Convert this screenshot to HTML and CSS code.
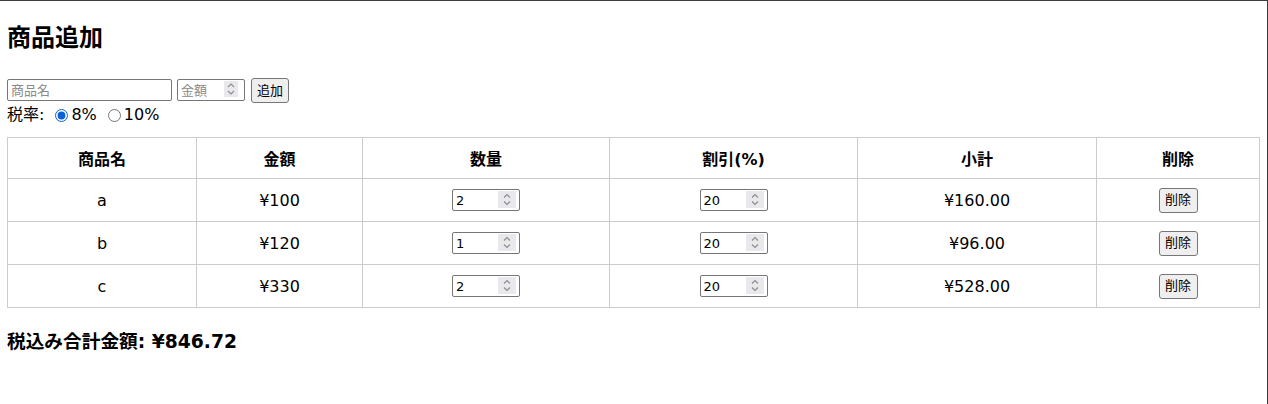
FILE: index.html
```html
<!DOCTYPE html>
<html lang="ja">
<head>
<meta charset="utf-8">
<title>商品追加</title>
<link rel="stylesheet" href="styles.css">
</head>
<body>
<div class="frame">
  <h2 class="title">商品追加</h2>
  <div class="add-row">
    <input class="name-input" type="text" placeholder="商品名">
    <span class="num-wrap price-wrap">
      <input class="price-input" type="number" placeholder="金額">
      <span class="spin"><svg viewBox="0 0 14 16" width="14" height="16"><path d="M4 6 L7 3 L10 6 M4 10 L7 13 L10 10" fill="none" stroke="#8c8c8c" stroke-width="1.1"/></svg></span>
    </span>
    <button class="btn add-btn">追加</button>
  </div>
  <div class="tax-row">
    <span class="tax-label">税率:</span>
    <label class="radio r1"><input type="radio" name="tax" checked>8%</label>
    <label class="radio r2"><input type="radio" name="tax">10%</label>
  </div>
  <table class="items">
    <thead>
      <tr>
        <th class="c1">商品名</th>
        <th class="c2">金額</th>
        <th class="c3">数量</th>
        <th class="c4">割引(%)</th>
        <th class="c5">小計</th>
        <th class="c6">削除</th>
      </tr>
    </thead>
    <tbody>
      <tr>
        <td>a</td><td>¥100</td>
        <td><span class="num-wrap"><input class="num" type="number" value="2"><span class="spin"><svg viewBox="0 0 18 17" width="18" height="17"><path d="M6 6.5 L9 3.5 L12 6.5 M6 10.5 L9 13.5 L12 10.5" fill="none" stroke="#8c8c8c" stroke-width="1.1"/></svg></span></span></td>
        <td><span class="num-wrap"><input class="num" type="number" value="20"><span class="spin"><svg viewBox="0 0 18 17" width="18" height="17"><path d="M6 6.5 L9 3.5 L12 6.5 M6 10.5 L9 13.5 L12 10.5" fill="none" stroke="#8c8c8c" stroke-width="1.1"/></svg></span></span></td>
        <td>¥160.00</td>
        <td><button class="btn del-btn">削除</button></td>
      </tr>
      <tr>
        <td>b</td><td>¥120</td>
        <td><span class="num-wrap"><input class="num" type="number" value="1"><span class="spin"><svg viewBox="0 0 18 17" width="18" height="17"><path d="M6 6.5 L9 3.5 L12 6.5 M6 10.5 L9 13.5 L12 10.5" fill="none" stroke="#8c8c8c" stroke-width="1.1"/></svg></span></span></td>
        <td><span class="num-wrap"><input class="num" type="number" value="20"><span class="spin"><svg viewBox="0 0 18 17" width="18" height="17"><path d="M6 6.5 L9 3.5 L12 6.5 M6 10.5 L9 13.5 L12 10.5" fill="none" stroke="#8c8c8c" stroke-width="1.1"/></svg></span></span></td>
        <td>¥96.00</td>
        <td><button class="btn del-btn">削除</button></td>
      </tr>
      <tr>
        <td>c</td><td>¥330</td>
        <td><span class="num-wrap"><input class="num" type="number" value="2"><span class="spin"><svg viewBox="0 0 18 17" width="18" height="17"><path d="M6 6.5 L9 3.5 L12 6.5 M6 10.5 L9 13.5 L12 10.5" fill="none" stroke="#8c8c8c" stroke-width="1.1"/></svg></span></span></td>
        <td><span class="num-wrap"><input class="num" type="number" value="20"><span class="spin"><svg viewBox="0 0 18 17" width="18" height="17"><path d="M6 6.5 L9 3.5 L12 6.5 M6 10.5 L9 13.5 L12 10.5" fill="none" stroke="#8c8c8c" stroke-width="1.1"/></svg></span></span></td>
        <td>¥528.00</td>
        <td><button class="btn del-btn">削除</button></td>
      </tr>
    </tbody>
  </table>
  <h3 class="total">税込み合計金額: ¥846.72</h3>
</div>
</body>
</html>
```
FILE: styles.css
```css
html, body {
  margin: 0;
  padding: 0;
  background: #fff;
}
body {
  font-family: "DejaVu Sans", "Noto Sans CJK JP", sans-serif;
  font-size: 16px;
  color: #000;
}
.frame {
  box-sizing: border-box;
  height: 404px;
  border-top: 1px solid #3c3c3c;
  border-right: 1px solid #3c3c3c;
  padding: 0 8px 0 7px;
  overflow: hidden;
}
.title {
  font-size: 24px;
  font-weight: bold;
  margin: 20px 0 0 0;
  line-height: 34px;
}
.add-row {
  margin-top: 23px;
  display: flex;
  align-items: flex-start;
  height: 25px;
}
input, button {
  font-family: "DejaVu Sans", "Noto Sans CJK JP", sans-serif;
  font-size: 13px;
}
input[type="number"] {
  -moz-appearance: textfield;
  appearance: textfield;
}
input[type="number"]::-webkit-inner-spin-button,
input[type="number"]::-webkit-outer-spin-button {
  -webkit-appearance: none;
  margin: 0;
}
.name-input, .price-input {
  box-sizing: border-box;
  height: 22px;
  margin: 0;
  padding: 1px 3px;
  border: 1px solid #767676;
  border-radius: 2px;
}
.name-input { width: 165px; margin-top: 1px; }
.price-input { width: 68px; }
input::placeholder { color: #8a8a8a; }
.num-wrap {
  position: relative;
  display: inline-block;
  vertical-align: middle;
  line-height: 0;
}
.price-wrap { margin: 1px 0 0 5px; }
.spin {
  position: absolute;
  background: #e9e9ed;
  display: block;
}
.spin svg { display: block; }
.price-wrap .spin {
  right: 7px;
  top: 2px;
  width: 14px;
  height: 16px;
}
.items .spin {
  right: 4px;
  top: 2px;
  width: 18px;
  height: 17px;
}
.btn {
  box-sizing: border-box;
  border: 1px solid #767676;
  border-radius: 3px;
  background: #efefef;
  color: #000;
  padding: 0 5px;
  height: 25px;
  line-height: 22px;
}
.add-btn { width: 38px; margin-left: 6px; padding: 0; }
.tax-row {
  display: flex;
  align-items: center;
  height: 24px;
  line-height: 24px;
}
.radio {
  display: flex;
  align-items: center;
}
.radio input {
  width: 13px;
  height: 13px;
  margin: 0 3px 0 0;
  accent-color: #0b62d6;
}
.r1 { margin-left: 11px; }
.r2 { margin-left: 11px; }
.items {
  margin-top: 10px;
  width: 1252px;
  border-collapse: collapse;
  table-layout: fixed;
}
.items th, .items td {
  box-sizing: border-box;
  border: 1px solid #cccccc;
  text-align: center;
  padding: 0 8px;
}
.items th {
  height: 41px;
  font-weight: bold;
  font-size: 16px;
}
.items td {
  height: 43px;
}
.c1 { width: 189px; }
.c2 { width: 166px; }
.c3 { width: 247px; }
.c4 { width: 248px; }
.c5 { width: 239px; }
.c6 { width: 163px; }
.num {
  box-sizing: border-box;
  width: 68px;
  height: 22px;
  margin: 0;
  padding: 1px 3px;
  border: 1px solid #767676;
  border-radius: 2px;
  font-size: 13px;
}
.del-btn {
  width: 39px;
  padding: 0;
  vertical-align: middle;
}
.total {
  font-size: 18.7px;
  font-weight: bold;
  margin: 21px 0 0 0;
  line-height: 26px;
}
```
